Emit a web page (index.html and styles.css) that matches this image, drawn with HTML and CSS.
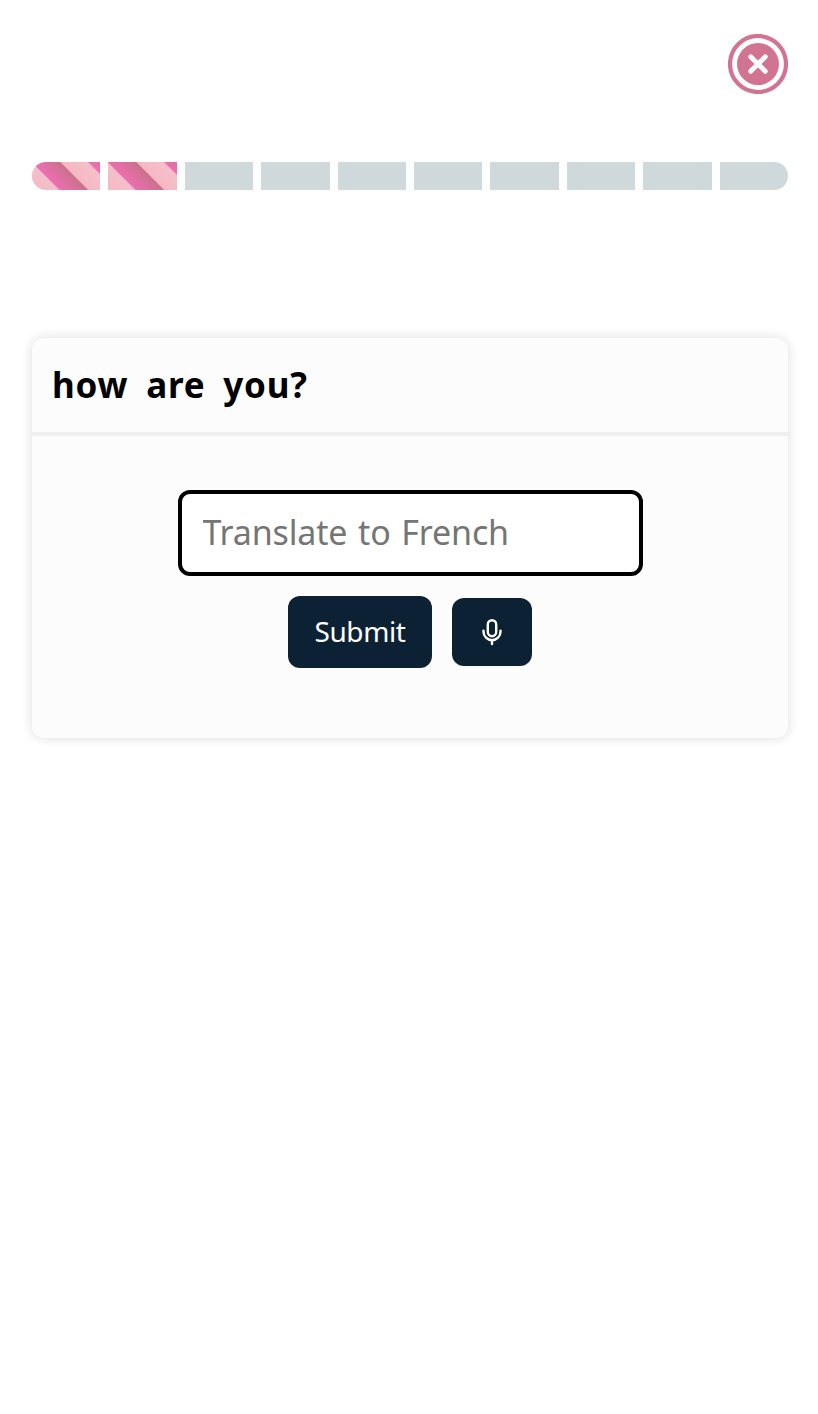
FILE: index.html
```html
<!DOCTYPE html>
<html lang="en">
<head>
<meta charset="utf-8">
<title>Translate</title>
<link rel="stylesheet" href="styles.css">
</head>
<body>
<header class="top">
  <button class="close" aria-label="Close">
    <svg viewBox="0 0 60 60" width="60" height="60"><circle cx="30" cy="30" r="28" fill="#fff" stroke="#d37392" stroke-width="4.2"/><circle cx="30" cy="30" r="21" fill="#d37392"/><path d="M22.7 22.7l14.6 14.6M37.3 22.7L22.7 37.3" stroke="#fff" stroke-width="4.8" stroke-linecap="round"/></svg>
  </button>
</header>
<div class="progress">
  <span class="step done"></span><span class="step done"></span><span class="step"></span><span class="step"></span><span class="step"></span><span class="step"></span><span class="step"></span><span class="step"></span><span class="step"></span><span class="step"></span>
</div>
<main class="card">
  <h1 class="question">how are you?</h1>
  <form class="answer">
    <input class="field" type="text" placeholder="Translate to French">
    <div class="actions">
      <button class="submit" type="button">Submit</button>
      <button class="mic" type="button" aria-label="Speak">
        <svg viewBox="0 0 28 34" width="28" height="34" fill="none" stroke="#fff" stroke-width="2.4" stroke-linecap="round"><rect x="9.8" y="5.2" width="8.4" height="16" rx="4.2"/><path d="M5.5 15.6v1.1a8.5 8.5 0 0 0 17 0v-1.1M14 25.4v3.6"/></svg>
      </button>
    </div>
  </form>
</main>
</body>
</html>
```

FILE: styles.css
```css
* { box-sizing: border-box; }
body {
  margin: 0;
  padding: 34px 30px 0 32px;
  min-height: 1414px;
  background: #fff;
  font-family: "M PLUS Rounded 1c", "Noto Sans", sans-serif;
}
button { border: 0; padding: 0; font-family: inherit; }
.top { display: flex; justify-content: flex-end; height: 60px; }
.close { width: 60px; height: 60px; background: none; }
svg { display: block; }
.progress { display: flex; gap: 8px; height: 28px; margin-top: 68px; }
.step { flex: 1; background: #cfd8db; }
.step:first-child { border-radius: 14px 0 0 14px; }
.step:last-child { border-radius: 0 14px 14px 0; }
.done {
  background: linear-gradient(45deg, #f5b8c4 25%, #f5c0c9 50%, #ee6eb2 50%, #c9718b 75%, #f5b8c4 75%, #f5c0c9) 0 0 / 56.5px 56.5px;
}
.card {
  height: 400px;
  margin-top: 148px;
  border-radius: 12px;
  background: #fcfcfc;
  box-shadow: 0 0 12px rgba(0, 0, 0, 0.14);
}
.question {
  display: flex;
  align-items: center;
  height: 98px;
  margin: 0;
  padding: 0 20px 1px;
  border-bottom: 4px solid #eeeff1;
  font-size: 35px;
  font-weight: 700;
  letter-spacing: 0.8px;
  word-spacing: 8px;
  color: #000;
}
.answer {
  display: flex;
  flex-direction: column;
  align-items: center;
  gap: 20px;
  padding-top: 54px;
}
.field {
  width: 465px;
  height: 86px;
  padding: 0 21px 2px;
  border: 4px solid #000;
  border-radius: 12px;
  outline: 0;
  background: #fff;
  font: 400 34px "M PLUS Rounded 1c", "Noto Sans", sans-serif;
  word-spacing: 2px;
  letter-spacing: -0.15px;
}
.field::placeholder { color: #757575; }
.actions { display: flex; align-items: center; gap: 20px; }
.submit, .mic { border-radius: 12px; background: #0d2134; color: #fff; }
.submit { width: 144px; height: 72px; padding-bottom: 2px; font-size: 28px; letter-spacing: -0.4px; }
.mic { display: flex; align-items: center; justify-content: center; width: 80px; height: 68px; }
```
